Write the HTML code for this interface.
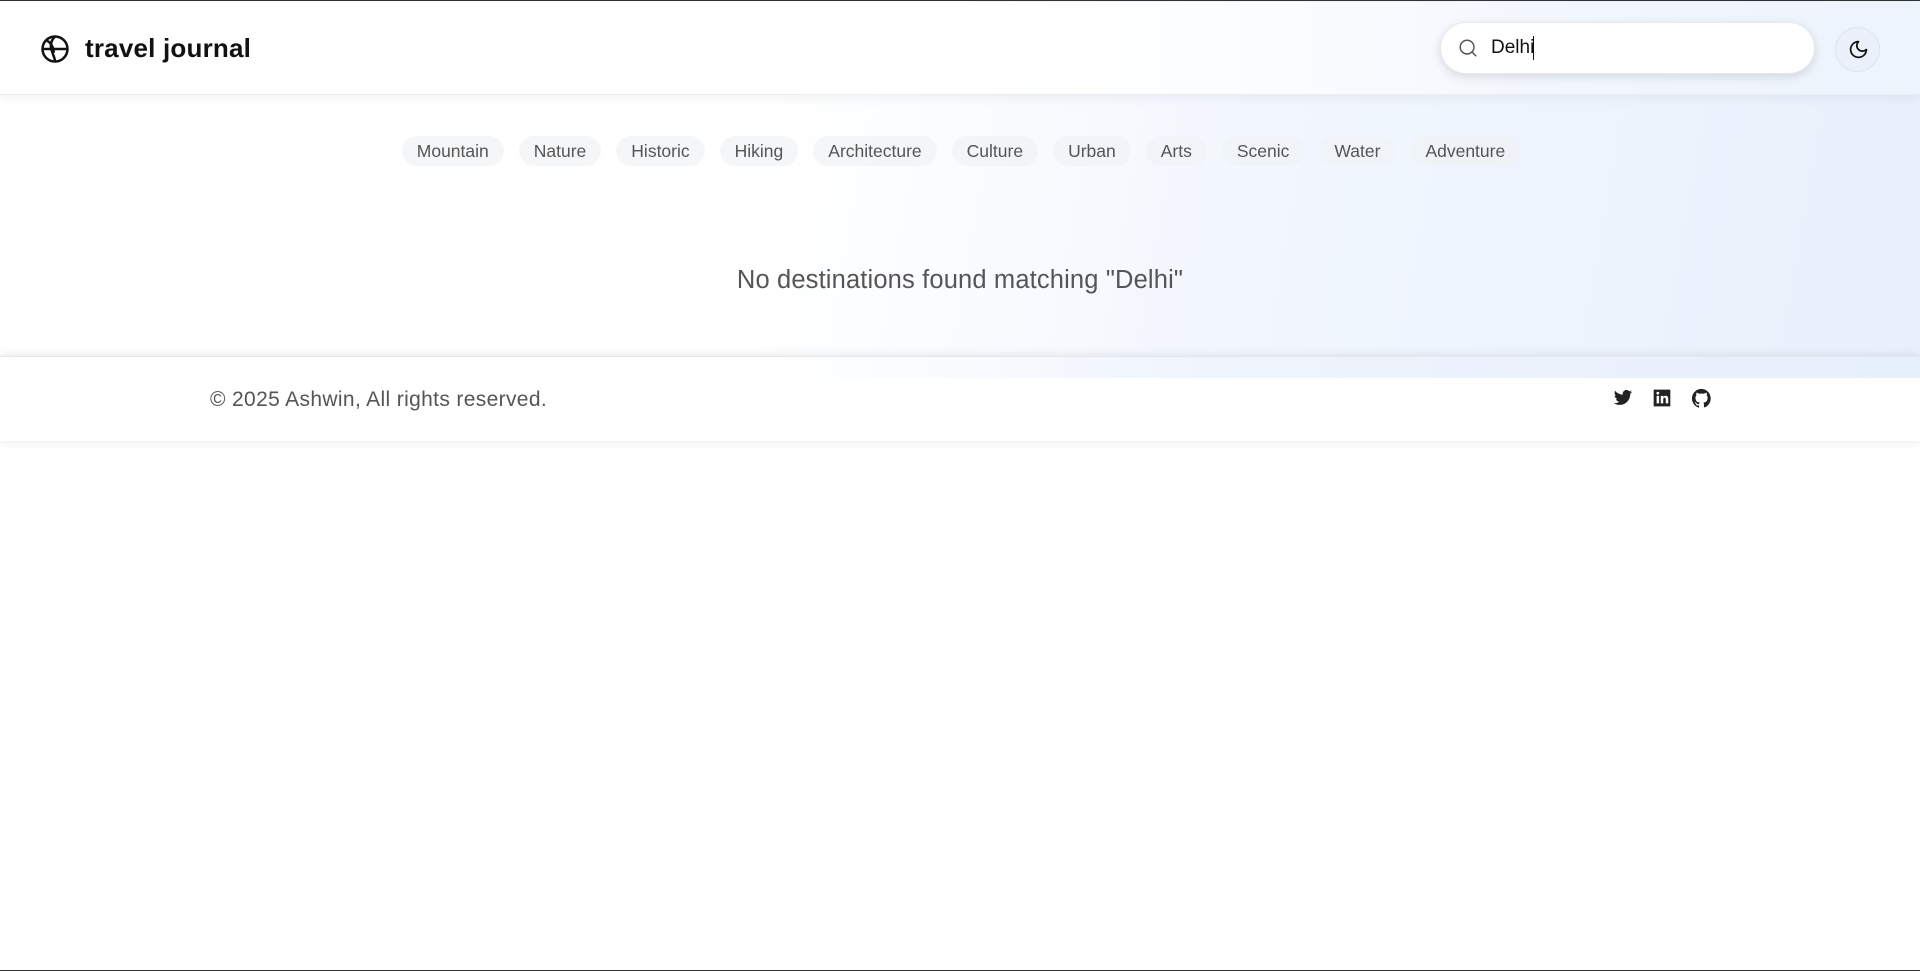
<!DOCTYPE html>
<html><head><meta charset="utf-8"><style>
*{margin:0;padding:0;box-sizing:border-box}
body{width:1920px;height:971px;overflow:hidden;background:#fff;font-family:"Liberation Sans",sans-serif;position:relative;border-top:1px solid #333;border-bottom:1px solid #333}
.main{position:absolute;left:0;top:0;width:1920px;height:376px;background:linear-gradient(100deg,#fff 0%,#fff 40%,#f2f7fe 65%,#e7f0fc 100%)}
header{position:absolute;left:0;top:1px;width:1920px;height:93px;background:linear-gradient(90deg,rgba(255,255,255,1) 0%,rgba(255,255,255,1) 50%,rgba(255,255,255,0.3) 80%,rgba(255,255,255,0.2) 100%);box-shadow:0 3px 10px rgba(0,0,0,0.06);border-bottom:1px solid #eceef2}
.logo{position:absolute;left:40px;top:32px}
.title{position:absolute;left:85px;top:31px;font-size:26px;font-weight:bold;color:#111;letter-spacing:0.2px}
.search{position:absolute;left:1440px;top:20px;width:375px;height:52px;border-radius:26px;background:#fff;box-shadow:0 3px 10px rgba(0,0,0,0.12);border:1px solid #e6e8ec}
.search svg{position:absolute;left:16px;top:14px}
.search span{position:absolute;left:50px;top:14px;font-size:19px;color:#111}
.search i{position:absolute;left:92px;top:13px;width:1px;height:24px;background:#111}
.moon{position:absolute;left:1835px;top:25px;width:45px;height:45px;border-radius:50%;background:#eaf1fb;border:1px solid #dde4ee}
.moon svg{position:absolute;left:12px;top:11px}
.tags{position:absolute;top:135px;left:0;width:1920px;display:flex;justify-content:center;gap:15px;padding-left:2px}
.tag{height:30px;line-height:30px;padding:0 15px;border-radius:15px;background:rgba(240,242,245,0.7);font-size:17.5px;color:#555}
.msg{position:absolute;top:265px;left:0;width:1920px;text-align:center;font-size:25.5px;letter-spacing:0.15px;color:#555}
footer{position:absolute;left:0;top:355px;width:1920px;height:85px;background:#fff;box-shadow:0 -3px 8px rgba(0,0,0,0.06),0 3px 8px rgba(0,0,0,0.05);border-top:1px solid #e4e6ea}
.strip{position:absolute;left:0;top:0;width:1920px;height:21px;background:linear-gradient(90deg,rgba(255,255,255,0) 0%,rgba(255,255,255,0) 40%,#eef4fd 65%,#e6effc 100%)}
.copy{position:absolute;left:210px;top:31px;font-size:21px;letter-spacing:0.35px;color:#555}
.icons{position:absolute;top:31px;left:1613px;display:flex;gap:19px}
</style></head><body>
<div class="main"></div>
<header>
<svg class="logo" width="30" height="30" viewBox="0 0 24 24" fill="none" stroke="#111" stroke-width="2"><circle cx="12" cy="12" r="10"/><path d="M2 12h20M12 2c-3 3-4 6-3 10s3 7 3 10M5 5c4 2 6 6 6 10"/></svg>
<div class="title">travel journal</div>
<div class="search"><svg width="22" height="22" viewBox="0 0 24 24" fill="none" stroke="#555" stroke-width="1.6"><circle cx="11" cy="11" r="7.5"/><path d="M16.5 16.5L21 21"/></svg><span>Delhi</span><i></i></div>
<div class="moon"><svg width="21" height="21" viewBox="0 0 24 24" fill="none" stroke="#111" stroke-width="2" stroke-linecap="round" stroke-linejoin="round"><path d="M12 3a6 6 0 0 0 9 9 9 9 0 1 1-9-9z"/></svg></div>
</header>
<div class="tags"><span class="tag">Mountain</span><span class="tag">Nature</span><span class="tag">Historic</span><span class="tag">Hiking</span><span class="tag">Architecture</span><span class="tag">Culture</span><span class="tag">Urban</span><span class="tag">Arts</span><span class="tag">Scenic</span><span class="tag">Water</span><span class="tag">Adventure</span></div>
<div class="msg">No destinations found matching "Delhi"</div>
<footer><div class="strip"></div>
<div class="copy">© 2025 Ashwin, All rights reserved.</div>
<div class="icons">
<svg width="20" height="20" viewBox="0 0 24 24" fill="#222"><path d="M23 4.6a9 9 0 0 1-2.6.7 4.5 4.5 0 0 0 2-2.5 9 9 0 0 1-2.9 1.1A4.5 4.5 0 0 0 11.8 8 12.8 12.8 0 0 1 2.5 3.3a4.5 4.5 0 0 0 1.4 6 4.5 4.5 0 0 1-2-.6 4.5 4.5 0 0 0 3.6 4.5 4.5 4.5 0 0 1-2 .1 4.5 4.5 0 0 0 4.2 3.1A9 9 0 0 1 1 18.3 12.8 12.8 0 0 0 7.9 20.3c8.3 0 12.8-6.9 12.8-12.8v-.6A9 9 0 0 0 23 4.6z"/></svg>
<svg width="20" height="20" viewBox="0 0 24 24" fill="#222"><path d="M2 2h20v20H2z M5.5 9.5v9h3v-9z M7 4.5a1.7 1.7 0 1 0 0 3.4 1.7 1.7 0 0 0 0-3.4z M10.5 9.5v9h3v-5c0-1.3.7-2 1.6-2s1.4.7 1.4 2v5h3v-5.5c0-2.6-1.4-3.7-3.2-3.7-1.3 0-2.2.6-2.8 1.4V9.5z" fill-rule="evenodd"/></svg>
<svg width="21" height="21" viewBox="0 0 24 24" fill="#222"><path d="M12 1a11 11 0 0 0-3.5 21.4c.6.1.8-.2.8-.5v-2c-3.1.7-3.7-1.4-3.7-1.4-.5-1.3-1.2-1.6-1.2-1.6-1-.7.1-.7.1-.7 1.1.1 1.7 1.1 1.7 1.1 1 1.7 2.6 1.2 3.2.9.1-.7.4-1.2.7-1.5-2.4-.3-5-1.2-5-5.4 0-1.2.4-2.2 1.1-2.9-.1-.3-.5-1.4.1-2.9 0 0 .9-.3 3 1.1a10.5 10.5 0 0 1 5.5 0c2.1-1.4 3-1.1 3-1.1.6 1.5.2 2.6.1 2.9.7.8 1.1 1.7 1.1 2.9 0 4.2-2.6 5.1-5 5.4.4.3.8 1 .8 2v3c0 .3.2.6.8.5A11 11 0 0 0 12 1z"/></svg>
</div></footer>
</body></html>
